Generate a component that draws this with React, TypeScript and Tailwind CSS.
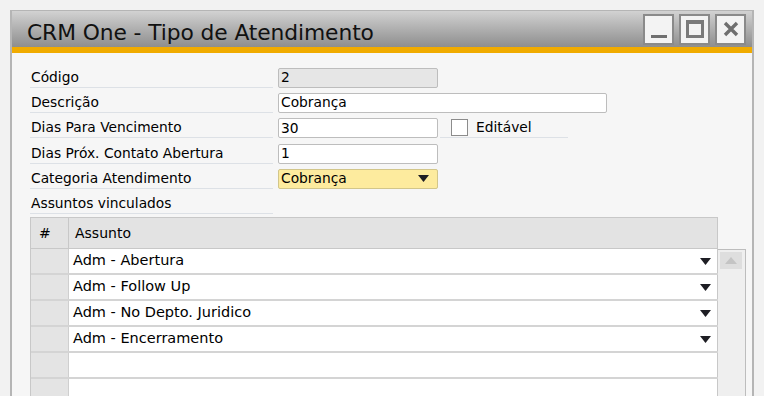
import React from "react";

const font = { fontFamily: "'DejaVu Sans', 'Liberation Sans', sans-serif" };

const Caret = () => (
  <svg width="11" height="7" viewBox="0 0 11 7" className="shrink-0">
    <polygon points="0,0 11,0 5.5,7" fill="#1e1e24" />
  </svg>
);

const Label = ({ text }: { text: string }) => (
  <div className="w-[243px] h-[20px] flex items-center border-b border-[#dde1e6] pl-[1px] text-[13.8px] text-black">
    {text}
  </div>
);

const Field = ({
  value,
  width,
  className,
  children,
}: {
  value: string;
  width: string;
  className?: string;
  children?: React.ReactNode;
}) => (
  <div
    className={`${width} h-[20px] ml-[5px] flex items-center pl-[2px] pr-[8px] border border-[#bdbdbd] rounded-[2px] text-[13.8px] text-black ${className ?? "bg-white"}`}
  >
    <span className="flex-1">{value}</span>
    {children}
  </div>
);

const rows = [
  "Adm - Abertura",
  "Adm - Follow Up",
  "Adm - No Depto. Juridico",
  "Adm - Encerramento",
  "",
  "",
];

const App = () => {
  return (
    <div className="w-[764px] h-[396px] bg-[#f2f2f2] pt-[10px] pl-[10px] pr-[10px] overflow-hidden" style={font}>
      <div className="h-[400px] border-l-2 border-r-2 border-t border-[#b5b5b5] bg-[#f6f6f6] flex flex-col">
        {/* title bar */}
        <div className="h-[36px] shrink-0 flex items-center justify-between pl-[15px] pr-[6px] bg-gradient-to-b from-[#d2d2d2] to-[#8e8e8e]">
          <span className="text-[21.8px] text-[#111] pt-[8px] tracking-[-0.1px]">CRM One - Tipo de Atendimento</span>
          <div className="flex gap-[5px]">
            <div className="w-[31px] h-[31px] bg-[#f3f3f3] border-2 border-[#8a8a8a] flex items-end justify-center pb-[5px]">
              <div className="w-[16px] h-[3px] bg-[#6f6f6f]" />
            </div>
            <div className="w-[31px] h-[31px] bg-[#f3f3f3] border-2 border-[#8a8a8a] flex items-center justify-center">
              <div className="w-[18px] h-[18px] border-[3px] border-[#7a7a7a] border-t-[4px]" />
            </div>
            <div className="w-[31px] h-[31px] bg-[#f3f3f3] border-2 border-[#8a8a8a] flex items-center justify-center">
              <svg width="16" height="16" viewBox="0 0 16 16">
                <path d="M2 2 L14 14 M14 2 L2 14" stroke="#6f6f6f" strokeWidth="3.4" />
              </svg>
            </div>
          </div>
        </div>
        <div className="h-[6px] shrink-0 bg-[#f0ab00]" />

        {/* form */}
        <div className="pl-[18px] pt-[12px] pr-[6px] flex flex-col">
          <div className="h-[25px] flex items-center">
            <Label text="Código" />
            <Field value="2" width="w-[160px]" className="bg-[#e6e6e6]" />
          </div>
          <div className="h-[25px] flex items-center">
            <Label text="Descrição" />
            <Field value="Cobrança" width="w-[329px]" />
          </div>
          <div className="h-[26px] flex items-center">
            <Label text="Dias Para Vencimento" />
            <Field value="30" width="w-[160px]" />
            <div className="ml-[2px] w-[128px] h-[20px] flex items-center border-b border-[#dde1e6] pl-[11px]">
              <div className="w-[17px] h-[17px] bg-white border border-[#8c8c8c]" />
              <span className="ml-[8px] text-[13.8px] text-black">Editável</span>
            </div>
          </div>
          <div className="h-[25px] flex items-center">
            <Label text="Dias Próx. Contato Abertura" />
            <Field value="1" width="w-[160px]" />
          </div>
          <div className="h-[25px] flex items-center">
            <Label text="Categoria Atendimento" />
            <Field value="Cobrança" width="w-[160px]" className="bg-[#fdeb9e] border-[#d2c68a]">
              <Caret />
            </Field>
          </div>
          <div className="h-[25px] flex items-center">
            <Label text="Assuntos vinculados" />
          </div>

          {/* grid */}
          <div className="mt-[1px] flex">
            <div className="w-[689px] flex flex-col border-l border-[#c8c8c8]">
              <div className="h-[32px] flex bg-[#e3e3e3] border-t border-r border-b border-[#c8c8c8] text-[14px] text-black">
                <div className="w-[38px] pl-[8px] pt-[5px] border-r border-[#c8c8c8]">#</div>
                <div className="flex-1 pl-[6px] pt-[5px]">Assunto</div>
              </div>
              {rows.map((r, i) => (
                <div key={i} className="h-[26px] flex border-b-2 border-[#d4d4d4]">
                  <div className="w-[38px] bg-[#e4e4e4] border-r border-[#cfcfcf]" />
                  <div className="flex-1 bg-white flex items-center pl-[4px] pr-[6px] border-r border-[#c8c8c8] text-[14.5px] text-black">
                    <span className="flex-1">{r}</span>
                    {r && <Caret />}
                  </div>
                </div>
              ))}
            </div>
            <div className="mt-[32px] w-[28px] h-[200px] bg-[#efefef] border border-l-0 border-[#bdbdbd] pt-[2px] pl-[2px]">
              <div className="w-[22px] h-[17px] bg-[#dedede] flex items-center justify-center">
                <svg width="12" height="7" viewBox="0 0 12 7">
                  <polygon points="0,7 12,7 6,0" fill="#c4c4c4" />
                </svg>
              </div>
            </div>
          </div>
        </div>
      </div>
    </div>
  );
};

export default App;
